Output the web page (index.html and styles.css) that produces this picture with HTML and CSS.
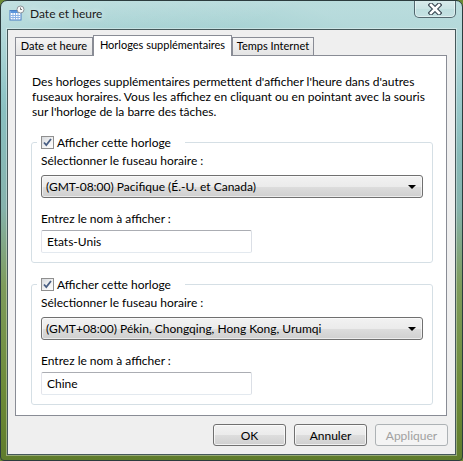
FILE: index.html
```html
<!DOCTYPE html>
<html lang="fr">

<head>
    <meta charset="UTF-8">
    <title>Date et heure</title>
    <link rel="stylesheet" href="styles.css">
</head>

<body>
    <div class="window">
        <div class="titlebar">
            <svg class="app-icon" width="16" height="16" viewBox="0 0 16 16">
                <rect x="1" y="5.5" width="11" height="9.5" fill="#fff" stroke="#4a7fc4"/>
                <rect x="1.5" y="6" width="10" height="2" fill="#5b95dc"/>
                <path d="M1.5 10.5h10M1.5 12.5h10M4 8v7M6.5 8v7M9 8v7" stroke="#8cb3e6" stroke-width="1"/>
                <circle cx="11.5" cy="4.5" r="3.5" fill="#fafafa" stroke="#8d9499"/>
                <path d="M11.5 2.5v2h1.5" stroke="#555" stroke-width="0.8" fill="none"/>
            </svg>
            <span class="title">Date et heure</span>
            <button class="close">
                <svg width="14" height="12" viewBox="0 0 14 12">
                    <path d="M3 2l8 8M11 2l-8 8" stroke="#3c4a55" stroke-width="4.8" stroke-linecap="square"/>
                    <path d="M3 2l8 8M11 2l-8 8" stroke="#fff" stroke-width="2.6" stroke-linecap="square"/>
                </svg>
            </button>
        </div>

        <div class="client">
            <div class="tabs">
                <div class="tab tab-date">Date et heure</div>
                <div class="tab tab-clocks active">Horloges supplémentaires</div>
                <div class="tab tab-internet">Temps Internet</div>
            </div>

            <div class="panel">
                <p class="intro">Des horloges supplémentaires permettent d'afficher l'heure dans d'autres fuseaux horaires. Vous les affichez en cliquant ou en pointant avec la souris sur l'horloge de la barre des tâches.</p>

                <fieldset class="group">
                    <legend>
                        <span class="checkbox">
                            <svg width="13" height="13" viewBox="0 0 13 13">
                                <path d="M3 6.5l2.3 2.6L10 3" stroke="#4a5f84" stroke-width="1.8" fill="none"/>
                            </svg>
                        </span>
                        Afficher cette horloge
                    </legend>
                    <div class="label">Sélectionner le fuseau horaire :</div>
                    <div class="combo">
                        <span>(GMT-08:00) Pacifique (É.-U. et Canada)</span>
                        <span class="arrow"></span>
                    </div>
                    <div class="label label-name">Entrez le nom à afficher :</div>
                    <div class="textbox">Etats-Unis</div>
                </fieldset>

                <fieldset class="group">
                    <legend>
                        <span class="checkbox">
                            <svg width="13" height="13" viewBox="0 0 13 13">
                                <path d="M3 6.5l2.3 2.6L10 3" stroke="#4a5f84" stroke-width="1.8" fill="none"/>
                            </svg>
                        </span>
                        Afficher cette horloge
                    </legend>
                    <div class="label">Sélectionner le fuseau horaire :</div>
                    <div class="combo">
                        <span>(GMT+08:00) Pékin, Chongqing, Hong Kong, Urumqi</span>
                        <span class="arrow"></span>
                    </div>
                    <div class="label label-name">Entrez le nom à afficher :</div>
                    <div class="textbox">Chine</div>
                </fieldset>
            </div>

            <div class="buttons">
                <button class="btn">OK</button>
                <button class="btn">Annuler</button>
                <button class="btn" disabled>Appliquer</button>
            </div>
        </div>
    </div>
</body>

</html>
```

FILE: styles.css
```css
* {
    margin: 0;
    padding: 0;
    box-sizing: border-box;
}

body {
    font-family: "Segoe UI", Lato, "Noto Sans", sans-serif;
    font-size: 12px;
    color: #000;
    background: #6b8a35;
}

/* Glass frame */
.window {
    width: 463px;
    height: 461px;
    display: flex;
    flex-direction: column;
    border: 1px solid #2c3c3e;
    border-radius: 7px 7px 4px 4px;
    background:
        linear-gradient(160deg, rgba(255, 255, 255, 0.35) 0%, rgba(255, 255, 255, 0) 18%),
        linear-gradient(200deg, rgba(255, 255, 255, 0.25) 10%, rgba(255, 255, 255, 0) 25%),
        linear-gradient(180deg, #a3d1d2 0%, #8ac2c4 20%, #86b3ad 45%, #7e9c5c 62%, #6d8b38 85%, #5f7c2c 100%);
    overflow: hidden;
}

.titlebar {
    height: 28px;
    flex-shrink: 0;
    display: flex;
    align-items: flex-start;
    padding: 0 6px 0 8px;
}

.app-icon {
    margin-top: 4px;
    flex-shrink: 0;
}

.title {
    margin: 5px 0 0 5px;
    color: #1a1a1a;
    text-shadow: 0 0 6px rgba(255, 255, 255, 0.9);
}

.close {
    margin: -1px 0 0 auto;
    width: 42px;
    height: 18px;
    display: flex;
    justify-content: center;
    align-items: center;
    border: 1px solid rgba(40, 60, 70, 0.75);
    border-top: none;
    border-radius: 0 0 5px 5px;
    background: linear-gradient(to bottom, rgba(255, 255, 255, 0.45) 0%, rgba(255, 255, 255, 0.25) 50%, rgba(255, 255, 255, 0.1) 51%, rgba(255, 255, 255, 0.2) 100%);
    box-shadow: inset 0 0 0 1px rgba(255, 255, 255, 0.45);
}

.client {
    flex: 1;
    margin: 0 6px 5px 6px;
    display: flex;
    flex-direction: column;
    padding: 5px 8px 0 7px;
    background: #efefef;
    border: 1px solid #45585a;
    box-shadow: 0 0 0 1px rgba(255, 255, 255, 0.35);
}

/* Tabs */
.tabs {
    display: flex;
    align-items: flex-end;
    height: 20px;
}

.tab {
    height: 18px;
    font-size: 11px;
    line-height: 16px;
    text-align: center;
    border: 1px solid #898c95;
    border-bottom: none;
    background: linear-gradient(to bottom, #f5f5f5, #e4e4e4);
}

.tab-date {
    width: 78px;
}

.tab-clocks {
    width: 139px;
}

.tab-internet {
    width: 82px;
}

.tab.active {
    height: 21px;
    margin-bottom: -1px;
    line-height: 17px;
    background: #fff;
    position: relative;
    z-index: 1;
}

.panel {
    background: #fff;
    border: 1px solid #898c95;
    padding: 18px 3px 10px 16px;
}

.intro {
    line-height: 15px;
    margin-bottom: 15px;
}

/* Group boxes */
.group {
    margin: 0 10px 0 -1px;
    border: 1px solid #d5dfe5;
    border-radius: 3px;
    padding: 3px 9px 9px 9px;
}

.group + .group {
    margin-top: 13px;
}

.group legend {
    display: flex;
    align-items: center;
    height: 16px;
    margin-left: -4px;
    padding: 0 14px 0 4px;
}

.checkbox {
    width: 13px;
    height: 13px;
    margin-right: 3px;
    border: 1px solid #8f8f8f;
    background: linear-gradient(135deg, #d6d9dd 0%, #f4f4f4 60%, #ffffff 100%);
    display: flex;
}

.checkbox svg {
    margin: -1px;
}

.label {
    line-height: 15px;
}

.label-name {
    margin-top: 13px;
}

.combo {
    margin-top: 7px;
    height: 23px;
    display: flex;
    align-items: center;
    justify-content: space-between;
    padding: 0 6px 0 4px;
    border: 1px solid #707070;
    border-radius: 3px;
    background: linear-gradient(to bottom, #f2f2f2 0%, #ebebeb 50%, #dddddd 51%, #cfcfcf 100%);
    box-shadow: inset 0 0 0 1px rgba(255, 255, 255, 0.6);
}

.arrow {
    width: 0;
    height: 0;
    border-left: 4px solid transparent;
    border-right: 4px solid transparent;
    border-top: 4px solid #000;
}

.textbox {
    margin-top: 4px;
    width: 211px;
    height: 23px;
    line-height: 21px;
    padding: 0 5px;
    border: 1px solid;
    border-color: #abadb3 #dbdfe6 #e3e9ef #e2e3ea;
    border-radius: 2px;
    background: #fff;
}

/* Dialog buttons */
.buttons {
    display: flex;
    justify-content: flex-end;
    gap: 8px;
    margin: 8px -1px 0 0;
}

.btn {
    width: 73px;
    height: 22px;
    font: inherit;
    color: #000;
    border: 1px solid #707070;
    border-radius: 3px;
    background: linear-gradient(to bottom, #f2f2f2 0%, #ebebeb 50%, #dddddd 51%, #cfcfcf 100%);
    box-shadow: inset 0 0 0 1px rgba(255, 255, 255, 0.7);
}

.btn:disabled {
    color: #a0a0a0;
    border-color: #adb2b5;
    background: #f4f4f4;
    box-shadow: none;
}
```
